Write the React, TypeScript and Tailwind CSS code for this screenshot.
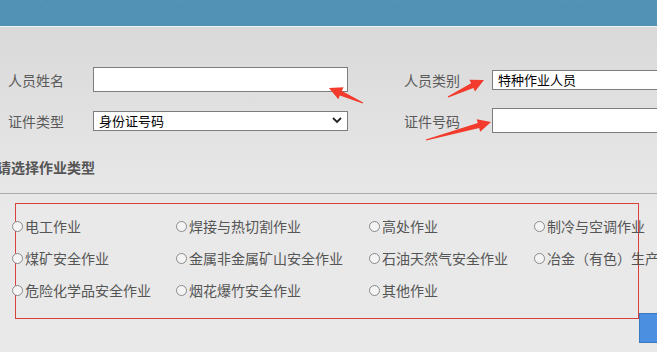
import React from "react";

const cjk = { fontFamily: '"Noto Sans CJK SC", "Noto Sans", sans-serif' };

type Pt = [number, number];

function arrowPoints(tail: Pt, head: Pt): string {
  const dx = head[0] - tail[0];
  const dy = head[1] - tail[1];
  const len = Math.hypot(dx, dy);
  const ux = dx / len;
  const uy = dy / len;
  const nx = -uy;
  const ny = ux;
  const L = 13;
  const W = 6.5;
  const w1 = 2.6;
  const w0 = 0.6;
  const bx = head[0] - ux * L;
  const by = head[1] - uy * L;
  const p = (x: number, y: number) => `${x.toFixed(1)},${y.toFixed(1)}`;
  return [
    p(tail[0] + nx * w0, tail[1] + ny * w0),
    p(bx + nx * w1, by + ny * w1),
    p(bx + nx * W, by + ny * W),
    p(head[0], head[1]),
    p(bx - nx * W, by - ny * W),
    p(bx - nx * w1, by - ny * w1),
    p(tail[0] - nx * w0, tail[1] - ny * w0),
  ].join(" ");
}

function Radio({ label }: { label: string }) {
  return (
    <div className="flex items-center gap-[2px] whitespace-nowrap">
      <span className="inline-block w-[11px] h-[11px] rounded-full border border-[#8a8a8a] bg-[#f4f4f4] shrink-0" />
      <span className="text-[14px] leading-none text-[#555]">{label}</span>
    </div>
  );
}

const rows: string[][] = [
  ["电工作业", "焊接与热切割作业", "高处作业", "制冷与空调作业"],
  ["煤矿安全作业", "金属非金属矿山安全作业", "石油天然气安全作业", "冶金（有色）生产安全作业"],
  ["危险化学品安全作业", "烟花爆竹安全作业", "其他作业", ""],
];

export default function App() {
  const arrows: [Pt, Pt][] = [
    [[363, 103], [329, 88]],
    [[448, 97], [484, 80]],
    [[426, 140], [491, 122]],
  ];
  return (
    <div
      className="relative w-[657px] h-[352px] overflow-hidden bg-gradient-to-b from-[#dadada] to-[#e9e9e9] from-[10%] to-[60%]"
      style={cjk}
    >
      {/* header */}
      <div className="h-[26px] bg-[#5293b5] overflow-hidden">
        <div className="flex gap-[40px] mt-[-33px] pl-[4px] text-[32px] font-bold leading-none text-[#5c9bbc] whitespace-nowrap">
          <span>人员查询</span>
          <span>信息</span>
          <span className="ml-[60px]">编辑资料</span>
          <span className="ml-[20px]">资料查询管理</span>
        </div>
      </div>
      <div className="h-[1px] bg-[#eef2f4]" />

      {/* form */}
      <div className="pt-[32px]">
        <div className="flex items-center h-[41px] pl-[8px]">
          <div className="w-[85px] shrink-0 text-[14px] text-[#5a5a5a] leading-none">人员姓名</div>
          <div className="w-[255px] shrink-0 h-[25px] bg-white border border-[#7d7d7d]" />
          <div className="ml-[56px] w-[88px] shrink-0 text-[14px] text-[#5a5a5a] leading-none">人员类别</div>
          <div className="w-[200px] shrink-0 h-[20px] bg-white border border-[#7d7d7d] flex items-center pl-[5px] text-[13px] text-black leading-none whitespace-nowrap">
            特种作业人员
          </div>
        </div>
        <div className="flex items-center h-[41px] pl-[8px]">
          <div className="w-[85px] shrink-0 text-[14px] text-[#5a5a5a] leading-none">证件类型</div>
          <div className="w-[255px] shrink-0 h-[20px] bg-white border border-[#7d7d7d] flex items-center justify-between pl-[5px] pr-[5px] text-[13px] text-black leading-none">
            <span>身份证号码</span>
            <svg width="10" height="7" viewBox="0 0 10 7">
              <path d="M1 1 L5 5 L9 1" fill="none" stroke="#222" strokeWidth="1.8" />
            </svg>
          </div>
          <div className="ml-[56px] w-[88px] shrink-0 text-[14px] text-[#5a5a5a] leading-none">证件号码</div>
          <div className="w-[200px] shrink-0 h-[25px] bg-white border border-[#7d7d7d]" />
        </div>
      </div>

      {/* section title */}
      <div className="h-[52px] flex items-center ml-[-3px] text-[14px] font-bold text-[#555] leading-none">
        请选择作业类型
      </div>
      <div className="h-[1px] bg-[#acacac]" />

      {/* options box */}
      <div className="flex items-start mt-[9px] pl-[15px]">
        <div className="w-[624px] shrink-0 h-[116px] border border-[#d9403c] pt-[6px]">
          <div className="ml-[-4px] grid grid-cols-[164px_193px_165px_200px]">
            {rows.map((r, i) =>
              r.map((label, j) => (
                <div key={`${i}-${j}`} className="h-[32px] flex items-center">
                  {label ? <Radio label={label} /> : null}
                </div>
              ))
            )}
          </div>
        </div>
        <div className="mt-[110px] w-[20px] shrink-0 h-[30px] bg-[#4a8fe0] border border-[#3a78c4]" />
      </div>

      {/* annotation arrows */}
      <svg className="absolute left-0 top-0 pointer-events-none" width="657" height="352">
        {arrows.map(([t, h], i) => (
          <polygon key={i} points={arrowPoints(t, h)} fill="#f23b2c" />
        ))}
      </svg>
    </div>
  );
}
